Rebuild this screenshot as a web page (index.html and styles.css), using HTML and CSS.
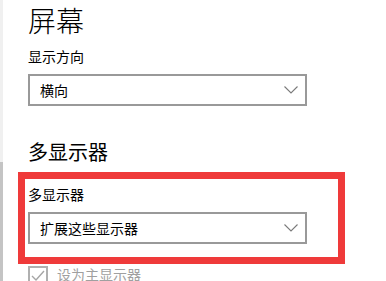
FILE: index.html
```html
<!DOCTYPE html>
<html lang="zh-CN">
<head>
<meta charset="utf-8">
<title>屏幕</title>
<link rel="stylesheet" href="styles.css">
</head>
<body>
<div class="page">
  <div class="rail">
    <div class="rail-top"></div>
    <div class="rail-bottom"></div>
  </div>
  <main class="main">
    <h1 class="title">屏幕</h1>
    <div class="label">显示方向</div>
    <div class="select">
      <span class="select-text">横向</span>
      <svg class="chev" width="14" height="8" viewBox="0 0 14 8"><path d="M0.5 0.5 L7 7 L13.5 0.5" fill="none" stroke="#7a7a7a" stroke-width="1.1"/></svg>
    </div>
    <h2 class="heading">多显示器</h2>
    <div class="highlight">
      <div class="label">多显示器</div>
      <div class="select">
        <span class="select-text">扩展这些显示器</span>
        <svg class="chev" width="14" height="8" viewBox="0 0 14 8"><path d="M0.5 0.5 L7 7 L13.5 0.5" fill="none" stroke="#7a7a7a" stroke-width="1.1"/></svg>
      </div>
    </div>
    <label class="check">
      <span class="box"><svg width="16" height="16" viewBox="0 0 16 16"><path d="M2 8 L6 12 L14 3" fill="none" stroke="#a6a6a6" stroke-width="1.4"/></svg></span>
      <span class="check-text">设为主显示器</span>
    </label>
  </main>
</div>
</body>
</html>
```

FILE: styles.css
```css
* { box-sizing: border-box; }
html, body {
  margin: 0;
  padding: 0;
  background: #fff;
  overflow: hidden;
}
body {
  font-family: "Noto Sans CJK SC", "Noto Sans", sans-serif;
  color: #000;
}
.page {
  display: flex;
  height: 281px;
}
.rail {
  width: 3px;
  display: flex;
  flex-direction: column;
}
.rail-top {
  height: 162px;
  background: #f0f0f0;
}
.rail-bottom {
  flex: 1;
  background: #c4c4c4;
}
.main {
  padding: 2px 0 0 25px;
  flex: 1;
}
.title {
  margin: 0;
  font-size: 28px;
  line-height: 36px;
  font-weight: 300;
}
.label {
  margin-top: 8px;
  font-size: 14px;
  line-height: 20px;
}
.select {
  margin-top: 8px;
  width: 279px;
  height: 32px;
  border: 2px solid #999;
  display: flex;
  align-items: center;
  padding: 0 7px 0 10px;
  font-size: 14px;
}
.select-text {
  flex: 1;
}
.chev {
  display: block;
}
.heading {
  margin: 32px 0 0;
  font-size: 20px;
  line-height: 28px;
  font-weight: 400;
}
.highlight {
  margin: 6px 0 0 -10px;
  width: 327px;
  border: 7px solid #ef3a3a;
  padding: 0 0 13px 3px;
}
.highlight .label {
  margin-top: 5px;
}
.check {
  margin-top: 2px;
  display: flex;
  align-items: flex-start;
  gap: 9px;
  color: #a0a0a0;
  font-size: 14px;
}
.box {
  width: 20px;
  height: 20px;
  border: 2px solid #b0b0b0;
  display: flex;
  align-items: center;
  justify-content: center;
}
.check-text {
  line-height: 18px;
  margin-top: -1px;
}
```
